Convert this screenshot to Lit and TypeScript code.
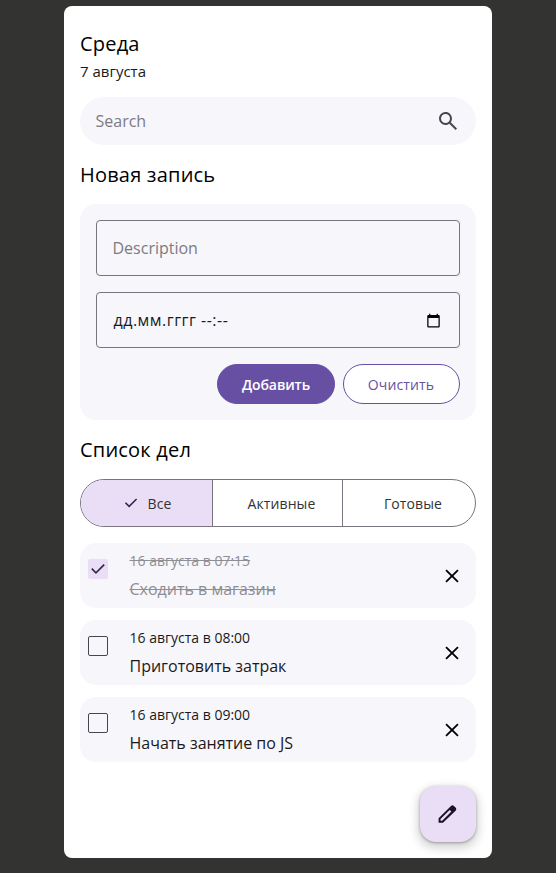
import { LitElement, html, css, svg, nothing } from "lit";
import { customElement, property } from "lit/decorators.js";
import { classMap } from "lit/directives/class-map.js";

const icons = {
  search: svg`<path d="M19.6 21l-6.3-6.3A6.1 6.1 0 0 1 9.5 16 6.27 6.27 0 0 1 4.888 14.112 6.27 6.27 0 0 1 3 9.5c0-1.817.63-3.354 1.888-4.612A6.27 6.27 0 0 1 9.5 3c1.817 0 3.354.63 4.612 1.888A6.27 6.27 0 0 1 16 9.5a6.1 6.1 0 0 1-1.3 3.8l6.3 6.3zM9.5 14c1.25 0 2.313-.437 3.188-1.312S14 10.75 14 9.5s-.437-2.312-1.312-3.187S10.75 5 9.5 5s-2.312.438-3.187 1.313S5 8.25 5 9.5s.438 2.313 1.313 3.188S8.25 14 9.5 14z"/>`,
  check: svg`<path d="M9.55 18l-5.7-5.7 1.425-1.425L9.55 15.15l9.175-9.175L20.15 7.4z"/>`,
  close: svg`<path d="M6.7 18.600L5.400 17.300l5.300-5.300-5.300-5.300L6.700 5.400l5.300 5.300 5.300-5.300 1.300 1.300-5.300 5.300 5.300 5.300-1.300 1.300-5.300-5.300z"/>`,
  pencil: svg`<path fill-rule="evenodd" d="M2.600 20.700v-4.400L15 3.900q1.400-1.200 2.900 0l1.900 1.900q1.100 1.400 0 2.800L7 20.700zM4.500 18.800h1.700L15.400 9.600l-1.700-1.700L4.500 17.100z"/>`,
  calendar: svg`<path fill-rule="evenodd" d="M20 3h-1V1h-2v2H7V1H5v2H4c-1.100 0-2 .9-2 2v16c0 1.100.9 2 2 2h16c1.100 0 2-.9 2-2V5c0-1.100-.9-2-2-2zm0 18H4V8h16v13z"/>`,
};

@customElement("ui-icon")
class UiIcon extends LitElement {
  @property() name: keyof typeof icons = "search";
  static styles = css`
    :host { display: block; width: 24px; height: 24px; flex: none; }
    svg { display: block; width: 100%; height: 100%; fill: currentColor; }
  `;
  render() {
    return html`<svg viewBox="0 0 24 24">${icons[this.name]}</svg>`;
  }
}

@customElement("task-item")
class TaskItem extends LitElement {
  @property() time = "";
  @property() text = "";
  @property({ type: Boolean }) done = false;
  static styles = css`
    :host {
      display: flex; box-sizing: border-box; height: 65px; padding: 0 12.500px 0 8px;
      border-radius: 16px; background: #f7f6fb; align-items: center;
    }
    .box {
      box-sizing: border-box; width: 20px; height: 20px; align-self: flex-start; margin-top: 16px;
      border: 1px solid #49454f; border-radius: 2px;
    }
    .box.done { border: 0; background: #eaddf6; color: #31244f; }
    .box ui-icon { width: 20px; height: 20px; margin-left: -0.500px; }
    .copy { flex: 1; margin-left: 21.500px; color: #1a1a1c; white-space: nowrap; }
    .copy.done { color: #8f8e93; text-decoration: line-through; }
    .time { font-size: 14px; line-height: 20px; }
    .text { font-size: 16px; line-height: 24px; margin-top: 6px; }
    .remove { color: #000; }
  `;
  render() {
    const done = { done: this.done };
    return html`
      <div class=${classMap({ box: true, ...done })}>${this.done ? html`<ui-icon name="check"></ui-icon>` : nothing}</div>
      <div class=${classMap({ copy: true, ...done })}>
        <div class="time">${this.time}</div>
        <div class="text">${this.text}</div>
      </div>
      <ui-icon class="remove" name="close"></ui-icon>
    `;
  }
}

@customElement("app-root")
class AppRoot extends LitElement {
  static styles = css`
    :host {
      display: flex; justify-content: center; box-sizing: border-box; height: 873px; padding: 6px 0 15px;
      background: #333331; color: #000; font: 400 16px/24px "Open Sans", sans-serif;
    }
    .card {
      box-sizing: border-box; width: 428px; padding: 24px 16px 16px; border-radius: 8px; background: #fff;
      display: flex; flex-direction: column;
    }
    h1, h2 { margin: 0; font-size: 20px; line-height: 28px; font-weight: 400; letter-spacing: 0.2px; }
    .date { margin-top: 3px; font-size: 15px; line-height: 20px; color: #1a1a1c; }
    .search {
      display: flex; align-items: center; justify-content: space-between; box-sizing: border-box;
      height: 48px; margin: 16px 0; padding: 0 16.500px 0 15.500px; border-radius: 24px; background: #f7f6fb; color: #7c7b80;
    }
    .search ui-icon { color: #49454f; }
    .form {
      display: flex; flex-direction: column; gap: 16px; box-sizing: border-box; height: 216px;
      margin: 15px 0 16px; padding: 16px; border-radius: 16px; background: #f7f6fb;
    }
    .field {
      display: flex; align-items: center; justify-content: space-between; box-sizing: border-box;
      height: 56px; padding: 0 18.500px 0 15.500px; border: 1px solid #79747e; border-radius: 4px; color: #7c7b80;
    }
    .field.when { color: #1a1a1c; letter-spacing: 0.5px; padding-left: 16.500px; }
    .field ui-icon { width: 15px; height: 15px; color: #000; }
    .actions { display: flex; justify-content: flex-end; gap: 8px; font-size: 14px; }
    .button {
      display: flex; align-items: center; justify-content: center; box-sizing: border-box; width: 117px;
      height: 40px; padding: 1px 1px 0 0; border: 1px solid #6750a4; border-radius: 20px; background: #fff; color: #6750a4; font-weight: 400;
      letter-spacing: 0.15px;
    }
    .button.primary { width: 118px; padding-right: 0; background: #6750a4; color: #fff; font-weight: 600; letter-spacing: -0.100px; }
    .filters {
      display: grid; grid-template-columns: 131px 130px 1fr; box-sizing: border-box; height: 48px; margin: 15px 0 16px;
      border: 1px solid #79747e; border-radius: 24px; overflow: hidden; font-size: 14px; font-weight: 400; color: #333;
      letter-spacing: 0.1px;
    }
    .filter { display: flex; align-items: center; justify-content: center; gap: 8px; padding-top: 2px; }
    .filter + .filter { border-left: 1px solid #79747e; padding-left: 8px; }
    .filter.active { background: #eaddf6; }
    .filter ui-icon { width: 18px; height: 18px; margin-top: -2px; color: #31244f; }
    .list { display: flex; flex-direction: column; gap: 12px; }
    .fab {
      display: flex; align-items: center; justify-content: center; width: 56px; height: 56px;
      margin: auto 0 0 auto; border-radius: 16px; background: #eaddf6; color: #1d1028;
      box-shadow: 0 1px 3px rgba(0, 0, 0, 0.3), 0 4px 8px 3px rgba(0, 0, 0, 0.15);
    }
  `;
  private tasks = [
    { time: "16 августа в 07:15", text: "Сходить в магазин", done: true },
    { time: "16 августа в 08:00", text: "Приготовить затрак", done: false },
    { time: "16 августа в 09:00", text: "Начать занятие по JS", done: false },
  ];
  render() {
    return html`
      <main class="card">
        <h1>Среда</h1>
        <div class="date">7 августа</div>
        <div class="search"><span>Search</span><ui-icon name="search"></ui-icon></div>
        <h2>Новая запись</h2>
        <section class="form">
          <div class="field">Description</div>
          <div class="field when"><span>дд.мм.гггг --:--</span><ui-icon name="calendar"></ui-icon></div>
          <div class="actions">
            <div class="button primary">Добавить</div>
            <div class="button">Очистить</div>
          </div>
        </section>
        <h2>Список дел</h2>
        <div class="filters">
          <div class="filter active"><ui-icon name="check"></ui-icon>Все</div>
          <div class="filter">Активные</div>
          <div class="filter">Готовые</div>
        </div>
        <section class="list">
          ${this.tasks.map((t) => html`<task-item .time=${t.time} .text=${t.text} .done=${t.done}></task-item>`)}
        </section>
        <div class="fab"><ui-icon name="pencil"></ui-icon></div>
      </main>
    `;
  }
}
